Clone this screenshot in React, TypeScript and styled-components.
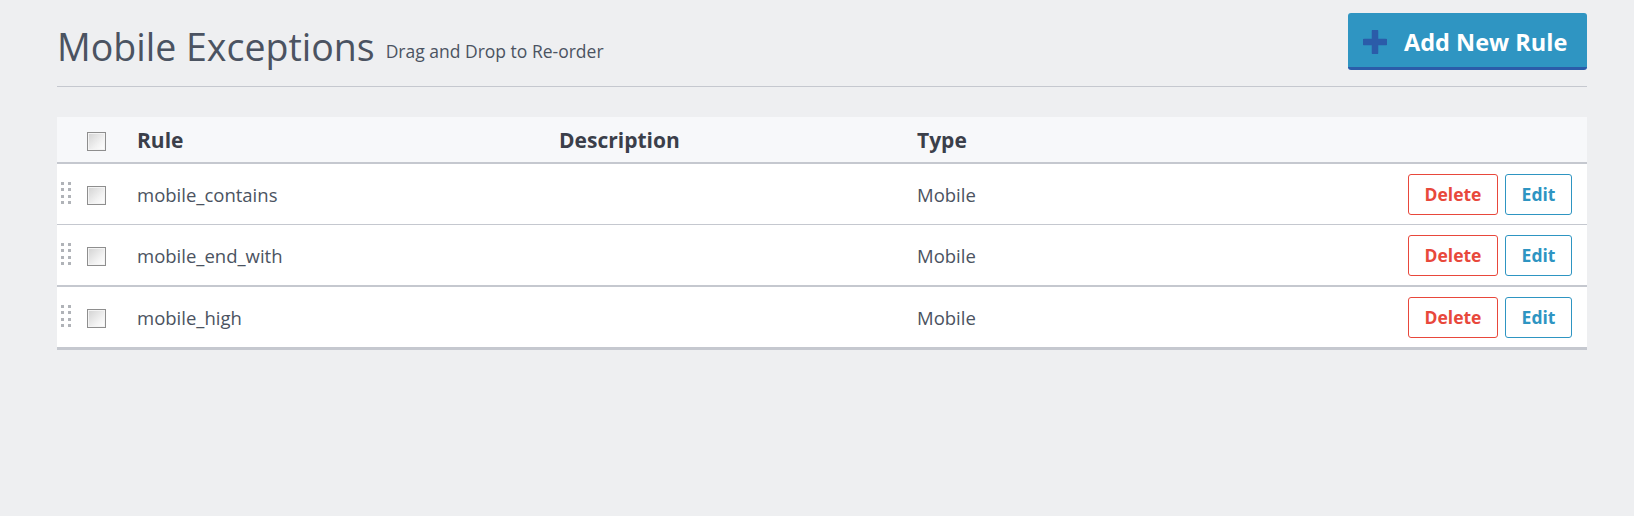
import React from "react";
import styled, { createGlobalStyle } from "styled-components";

const FONT = `"Open Sans", "Noto Sans", sans-serif`;

const Global = createGlobalStyle`
  html, body { margin: 0; padding: 0; }
  body {
    background: #eeeff1;
    font-family: ${FONT};
    color: #4b5361;
  }
`;

const Page = styled.div`
  padding: 13px 47px 0 57px;
`;

const Header = styled.div`
  display: flex;
  align-items: flex-end;
  justify-content: space-between;
  border-bottom: 1px solid #c5c8cf;
  padding-bottom: 16px;
`;

const TitleWrap = styled.div`
  display: flex;
  align-items: flex-end;
  gap: 11px;
  margin-bottom: 1.5px;
`;

const Title = styled.h1`
  margin: 0;
  font-weight: 400;
  font-size: 37.5px;
  line-height: 44px;
  color: #4b5361;
`;

const Subtitle = styled.span`
  font-size: 17.5px;
  line-height: 24px;
  padding-bottom: 6px;
  color: #4b5361;
`;

const AddButton = styled.button`
  display: flex;
  align-items: center;
  gap: 17px;
  height: 57px;
  width: 239px;
  box-sizing: border-box;
  padding: 3px 0 0 15px;
  border: none;
  border-bottom: 3px solid #2b5ca9;
  border-radius: 3px;
  background: #2f95c2;
  color: #fff;
  font-family: ${FONT};
  font-weight: 700;
  font-size: 23.5px;
  cursor: pointer;
`;

const Table = styled.div`
  margin-top: 30px;
  background: #fff;
  border-bottom: 3px solid #c5c8cf;
`;

const Row = styled.div<{ $head?: boolean; $thick?: boolean }>`
  display: grid;
  grid-template-columns: 30px 50px 422px 358px 1fr auto;
  align-items: center;
  height: ${(p) => (p.$head ? 45 : 60)}px;
  background: ${(p) => (p.$head ? "#f7f8fa" : "#fff")};
  border-bottom: ${(p) => (p.$head || p.$thick ? 2 : 1)}px solid #c5c8cf;
  &:last-child { border-bottom: none; }
`;

const HeadCell = styled.div`
  font-weight: 700;
  font-size: 21px;
  color: #3b3f4a;
`;

const Cell = styled.div`
  font-size: 18.5px;
  color: #4b5361;
`;

const Actions = styled.div`
  display: flex;
  justify-content: flex-end;
  gap: 7px;
  padding-right: 15px;
`;

const ActionButton = styled.button<{ $tone: "red" | "blue"; $w: number }>`
  height: 41px;
  width: ${(p) => p.$w}px;
  box-sizing: border-box;
  background: #fff;
  border: 1px solid ${(p) => (p.$tone === "red" ? "#e8483b" : "#2e95c2")};
  border-radius: 3px;
  color: ${(p) => (p.$tone === "red" ? "#e8483b" : "#2e95c2")};
  font-family: ${FONT};
  font-weight: 700;
  font-size: 17.5px;
  padding: 0;
  cursor: pointer;
`;

const Check = styled.span`
  display: block;
  width: 19px;
  height: 19px;
  margin-top: 3px;
  box-sizing: border-box;
  border: 1px solid #8e8e8e;
  background: linear-gradient(135deg, #d2d2d2 0%, #f3f3f3 65%, #ffffff 100%);
  box-shadow: inset 0 0 0 1px #f4f4f4;
`;

const Handle = styled.span`
  display: grid;
  grid-template-columns: 3px 3px;
  grid-auto-rows: 3px;
  column-gap: 4px;
  row-gap: 3.3px;
  margin-left: 4px;
  margin-top: -2px;
  & > i {
    display: block;
    background: #b0b3b8;
  }
`;

const DragHandle = () => (
  <Handle>
    {Array.from({ length: 8 }).map((_, i) => (
      <i key={i} />
    ))}
  </Handle>
);

const PlusIcon = () => (
  <svg width="24" height="24" viewBox="0 0 24 24">
    <path d="M12 1.5v21M1.5 12h21" stroke="#2b5ca9" strokeWidth="6.5" strokeLinecap="round" />
  </svg>
);

const rules = [
  { name: "mobile_contains", type: "Mobile", thick: false },
  { name: "mobile_end_with", type: "Mobile", thick: true },
  { name: "mobile_high", type: "Mobile", thick: false },
];

export default function App() {
  return (
    <>
      <Global />
      <Page>
        <Header>
          <TitleWrap>
            <Title>Mobile Exceptions</Title>
            <Subtitle>Drag and Drop to Re-order</Subtitle>
          </TitleWrap>
          <AddButton>
            <PlusIcon />
            Add New Rule
          </AddButton>
        </Header>
        <Table>
          <Row $head>
            <span />
            <Check />
            <HeadCell>Rule</HeadCell>
            <HeadCell>Description</HeadCell>
            <HeadCell>Type</HeadCell>
            <span />
          </Row>
          {rules.map((r) => (
            <Row key={r.name} $thick={r.thick}>
              <DragHandle />
              <Check />
              <Cell>{r.name}</Cell>
              <Cell />
              <Cell>{r.type}</Cell>
              <Actions>
                <ActionButton $tone="red" $w={90}>Delete</ActionButton>
                <ActionButton $tone="blue" $w={67}>Edit</ActionButton>
              </Actions>
            </Row>
          ))}
        </Table>
      </Page>
    </>
  );
}
